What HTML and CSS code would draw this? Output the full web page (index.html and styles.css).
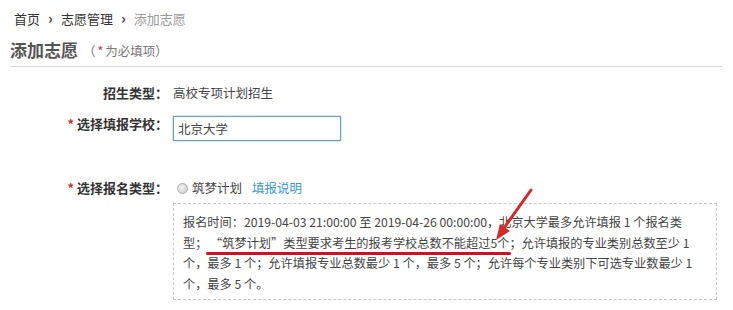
FILE: index.html
```html
<!DOCTYPE html>
<html lang="zh-CN">
<head>
    <meta charset="UTF-8"/>
    <title>添加志愿</title>
    <link rel="stylesheet" href="styles.css">
</head>
<body>
<div class="crumb">
    <a href="#">首页</a><span class="sep">›</span><a href="#">志愿管理</a><span class="sep">›</span><span class="current">添加志愿</span>
</div>
<div class="title-bar">
    <h2>添加志愿</h2>
    <span class="hint">（<i class="star">*</i>为必填项）</span>
</div>

<form class="form">
    <label class="row-1">招生类型：</label>
    <div class="value row-1">高校专项计划招生</div>

    <label for="school" class="row-2"><i class="star">*</i> 选择填报学校：</label>
    <div class="row-2"><input type="text" id="school" value="北京大学"/></div>

    <label class="row-3"><i class="star">*</i> 选择报名类型：</label>
    <div class="value row-3">
        <span class="radio"></span>
        <span class="opt">筑梦计划</span>
        <a href="#" class="link">填报说明</a>
    </div>

    <div class="notice">
        报名时间：2019-04-03 21:00:00 至 2019-04-26 00:00:00，北京大学最多允许填报 1 个报名类<br>
        型； <span class="mark">“筑梦计划”类型要求考生的报考学校总数不能超过5个</span>；允许填报的专业类别总数至少 1<br>
        个，最多 1 个；允许填报专业总数最少 1 个，最多 5 个；允许每个专业类别下可选专业数最少 1<br>
        个，最多 5 个。
        <svg class="arrow" width="45" height="60" viewBox="0 0 45 60">
            <line x1="42" y1="4" x2="15" y2="42" stroke="#d42a2a" stroke-width="3" stroke-linecap="round"/>
            <polygon points="7,54 21,45 11,38" fill="#d42a2a"/>
        </svg>
    </div>
</form>
</body>
</html>
```
FILE: styles.css
```css
body {
    margin: 0;
    background: #fff;
    color: #333;
    font-family: "Noto Sans CJK SC", "Liberation Sans", sans-serif;
    font-size: 13px;
    width: 733px;
    height: 310px;
    overflow: hidden;
}

a {
    color: #333;
    text-decoration: none;
}

i {
    font-style: normal;
}

.star {
    color: #c9302c;
}

.crumb {
    padding: 9px 14px 0;
    line-height: 18px;
}

.crumb .sep {
    margin: 0 8px;
    font-size: 15px;
    font-weight: bold;
    color: #444;
}

.crumb .current {
    color: #999;
}

.title-bar {
    margin: 0 11px 0 10px;
    padding: 10px 0 4px;
    border-bottom: 1px solid #d8d8d8;
    display: flex;
    align-items: center;
}

.title-bar h2 {
    margin: 0;
    font-size: 17px;
    line-height: 24px;
    color: #555;
}

.hint {
    margin-left: 5px;
    font-size: 12.5px;
    color: #777;
}

.hint .star {
    margin: 0 2px;
}

.form {
    display: grid;
    grid-template-columns: 168px 544px;
    column-gap: 5px;
    margin-top: 16px;
}

label {
    text-align: right;
    font-weight: bold;
    line-height: 20px;
    color: #333;
}

.value {
    line-height: 20px;
    font-size: 12.5px;
    color: #444;
    display: flex;
    align-items: center;
}

.row-2 {
    margin-top: 13px;
}

label.row-2 {
    line-height: 16px;
}

.row-3 {
    margin-top: 37px;
}

input {
    width: 168px;
    height: 25px;
    box-sizing: border-box;
    padding: 0 4px;
    border: 1px solid #6a9fb8;
    box-shadow: 0 0 2px rgba(102, 175, 200, 0.7);
    font-family: inherit;
    font-size: 12.5px;
    color: #444;
    outline: none;
}

.radio {
    width: 9px;
    height: 9px;
    margin: 0 4px 0 4px;
    border: 1px solid #aaa;
    border-radius: 50%;
    background: radial-gradient(circle at 40% 40%, #f4f4f4, #c8c8c8);
}

.link {
    margin-left: 10px;
    color: #3d96d0;
}

.notice {
    grid-column: 2;
    position: relative;
    margin-top: 5px;
    padding: 8px 9px 5px;
    border: 1px dashed #c8c8c8;
    line-height: 20.5px;
    font-size: 12.2px;
    color: #444;
    white-space: nowrap;
}

.mark {
    position: relative;
}

.mark::after {
    content: "";
    position: absolute;
    left: -4px;
    right: -2px;
    bottom: -3px;
    height: 3px;
    border-radius: 2px;
    background: #c8161d;
}

.arrow {
    position: absolute;
    left: 315px;
    top: -18px;
}
```
